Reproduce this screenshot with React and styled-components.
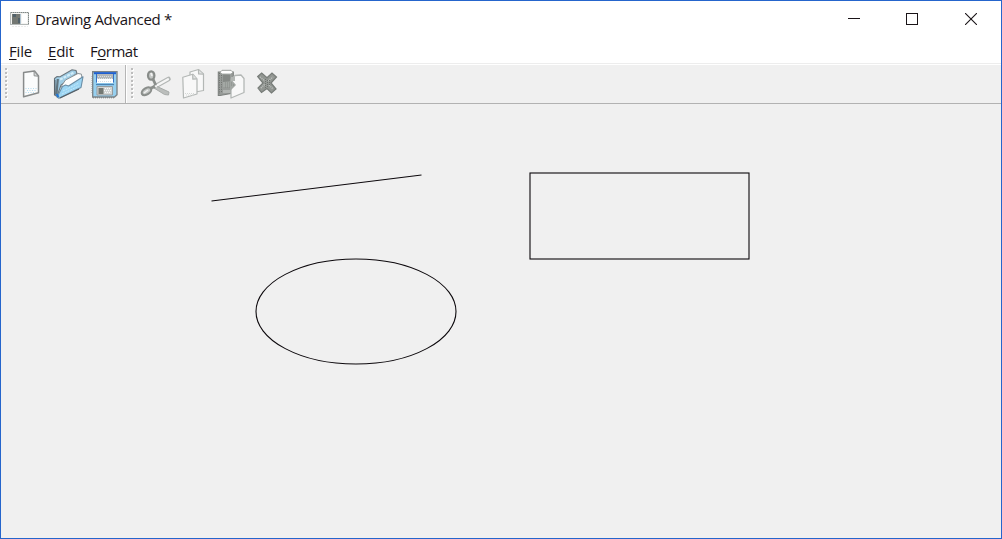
import React from "react";
import styled, { createGlobalStyle } from "styled-components";

const GlobalStyle = createGlobalStyle`
  * { box-sizing: border-box; }
  body { margin: 0; background: #fff; }
`;

const Window = styled.div`
  width: 1002px;
  height: 539px;
  display: flex;
  flex-direction: column;
  border: 1px solid #2565cc;
  background: #f0f0f0;
  color: #1a1418;
  font-family: "Open Sans", "Noto Sans", sans-serif;
  overflow: hidden;
`;

const TitleBar = styled.header`
  height: 37px;
  display: flex;
  align-items: center;
  background: #fff;
  padding: 0 1px 1px 9px;
`;

const Title = styled.div`
  flex: 1;
  margin-left: 5px;
  font-size: 15px;
  line-height: 20px;
  letter-spacing: ${(p) => p.$tracking}px;
  white-space: pre;
`;

const CaptionButton = styled.button`
  width: 58.4px;
  height: 36px;
  padding: 0;
  border: 0;
  background: transparent;
  display: flex;
  align-items: center;
  justify-content: center;
`;

const MenuBar = styled.nav`
  height: 27px;
  display: flex;
  background: #fff;
  padding: 3px 0 0 8px;
  box-shadow: inset 0 -1px #fff, inset 0 -2px #ededed;
`;

const MenuItem = styled.div`
  width: ${(p) => p.$width}px;
  font-size: 15px;
  line-height: 20px;
  letter-spacing: ${(p) => p.$tracking}px;
  u { text-underline-offset: 2px; text-decoration-thickness: 1px; text-decoration-skip-ink: none; }
`;

const ToolBar = styled.div`
  height: 39px;
  flex: none;
  display: flex;
  border-bottom: 1px solid #b2b2b2;
`;

const ToolGroup = styled.div`
  display: flex;
  gap: 1px;
  width: ${(p) => p.$width}px;
  padding-left: ${(p) => p.$inset}px;
  border-right: ${(p) => (p.$divided ? "1px solid #b5b5b5" : "0")};
  box-shadow: ${(p) => (p.$divided ? "1px 0 #fff" : "none")};
`;

const Grip = styled.svg`
  width: 4px;
  height: 34px;
  margin: 2px ${(p) => p.$after}px 0 0;
`;

const ToolButton = styled.button`
  width: 36px;
  height: 38px;
  padding: 3px 2px;
  border: 0;
  background: transparent;
  svg { display: block; width: 32px; height: 32px; overflow: visible; }
`;

const Canvas = styled.svg`
  display: block;
  flex: none;
  width: 1000px;
  height: 434px;
`;

function AppIcon() {
  return (
    <svg width="20" height="18" viewBox="0 0 20 18" shapeRendering="crispEdges">
      <path d="M.5 2.5h18v12H.5z" fill="#f4f4f2" stroke="#b4b9b8" />
      <path d="M2 4h8v10H2z" fill="#747873" />
      <path d="M3 4h3v3H3zM8 8h2v5H8z" fill="#52626b" />
      <path d="M10 4h1v10h-1z" fill="#afc2cf" />
      <path d="M12 4h5v9h-5z" fill="#fff" />
      <path d="M1 2.5h18M18.5 3v12" fill="none" stroke="#818886" strokeDasharray="1 1" />
      <path d="M2 16.5h16" stroke="#ececec" strokeDasharray="2 1" />
    </svg>
  );
}

function DragGrip({ after }) {
  return (
    <Grip $after={after} viewBox="0 0 4 34" shapeRendering="crispEdges">
      {[0, 4, 8, 12, 16, 20, 24, 28].map((y) => (
        <g key={y}>
          <path d={`M1 ${y + 2}h2v2h-2z`} fill="#fff" />
          <path d={`M0 ${y + 1}h2v2h-2z`} fill="#bdbdbd" />
        </g>
      ))}
    </Grip>
  );
}

function NewIcon() {
  return (
    <svg viewBox="0 0 32 32">
      <path d="M8.6 4.5 19.5 3l4 5v16.7L8.6 28.8z" fill="#fbfcfc" stroke="#888b8b" strokeWidth="1.5" strokeLinejoin="round" />
      <path d="M19.1 3.2v4.6l4.2.4z" fill="#d9dddd" stroke="#8d9090" />
      <path d="M10.5 20.5h11M12 22.5h9M10.5 24.5h9" stroke="#b7ddf0" strokeDasharray="1 1.5" />
    </svg>
  );
}

function OpenIcon() {
  return (
    <svg viewBox="0 0 32 32">
      <path d="M2.5 10.5 5 8.5l3 .3L20 1.8l4 .7 1 3L9 17 5 28.5 2.5 27z" fill="#9fcce4" stroke="#6a757c" strokeWidth="1.1" />
      <path d="M8 11.5 22 4.5" fill="none" stroke="#d2edf9" strokeWidth="2.2" strokeDasharray="3 1" />
      <path d="m9.5 18 4-6L26 5.5l3.4.6.6 4-19 12z" fill="#fcfcfc" stroke="#8a9398" />
      <path d="m5 29 5.5-10.5 3-1.5 3 1L31 8.8 29 19.5 7 30.2z" fill="#9cd5f3" stroke="#6a8da5" strokeWidth="1.1" strokeLinejoin="round" />
      <path d="m11 23 16-8M10 26l17-8" stroke="#c4e9fa" strokeDasharray="2 1" />
      <path d="M5.8 11 4.5 26" stroke="#62757f" strokeWidth="2.2" />
      <path d="m2.8 12 .2 15M8 30l19-9" stroke="#555f66" strokeWidth="1.2" />
      <path d="m4.5 26 2 3" stroke="#1f75d4" strokeWidth="2" />
    </svg>
  );
}

function SaveIcon() {
  return (
    <svg viewBox="0 0 32 32">
      <path d="M3.7 3.7H28v23.1l-2.5 2.2H3.7z" fill="#96d0f0" stroke="#7d8488" strokeWidth="1.4" />
      <path d="M5 5.2h22" stroke="#205fd0" strokeWidth="2" />
      <path d="M8 6h16v9H8z" fill="#b4b7b8" />
      <path d="M8 11h16v4H8z" fill="#fff" />
      <path d="M9 8.5h14M8 10.5h15M9 13.5h14" stroke="#d8e1e5" strokeDasharray="1 1" />
      <path d="M7.5 6v8.5M24.5 6v8.5" stroke="#346fc5" />
      <path d="M7 16.5h18" stroke="#4c83b4" strokeWidth="1.3" />
      <path d="M8 18.5h15.5V27H8z" fill="#d3d5d4" stroke="#979b9d" />
      <path d="M9.5 20h5v6h-5z" fill="#737873" />
      <path d="M16 20.5h6M15 22.5h7M16 24.5h6" stroke="#f8f8f8" strokeDasharray="1 1" />
      <path d="M4 29.8h21" stroke="#777d7d" strokeDasharray="1 1" />
      <path d="M2.5 8v18" stroke="#c7cccf" strokeDasharray="1 1" />
    </svg>
  );
}

function CutIcon() {
  return (
    <svg viewBox="0 0 32 32" fill="none">
      <path d="M16 18.5 29.5 11" stroke="#b3b7b5" strokeWidth="4.6" strokeLinecap="round" />
      <path d="M17 18 29 11.2" stroke="#f6f6f6" strokeWidth="2.2" strokeLinecap="round" />
      <path d="m16 17.5 14 6.5-.5 3-4-.5L15 20z" fill="#bbbebc" stroke="#a7aba9" />
      <ellipse cx="12.2" cy="7.5" rx="3.2" ry="4.2" fill="#c5c8c6" stroke="#888c89" strokeWidth="2.2" />
      <path d="m12 5 1 3" stroke="#f2f2f2" strokeWidth="1.8" />
      <path d="m14 11 2.7 6" stroke="#8a8e8b" strokeWidth="2.8" />
      <ellipse cx="7.5" cy="23.3" rx="5.3" ry="3.2" transform="rotate(-33 7.5 23.3)" fill="#c5c8c6" stroke="#8a8e8b" strokeWidth="2.1" />
      <path d="m5 25 4-3" stroke="#f2f2f2" strokeWidth="1.5" />
      <path d="m11 20.5 5-2.2" stroke="#8a8e8b" strokeWidth="3" />
      <path d="m16 18 2 .8" stroke="#f0f0f0" strokeWidth="1.6" />
    </svg>
  );
}

function CopyIcon() {
  return (
    <svg viewBox="0 0 32 32" fill="#f8f8f8" stroke="#b3b7b5" strokeWidth="1.2" strokeLinejoin="round">
      <path d="m14 4 8.5-2.5L27.5 6v16.5L14 25z" />
      <path d="m22.5 1.7.1 4.3 4.7.2" fill="#e1e3e2" />
      <path d="m6.8 9.2 10-3L21 11v15L7.5 30z" />
      <path d="m16.7 6.2.1 5 4-.3" fill="#e1e3e2" />
      <path d="M9 25.5h10M10 27h7" stroke="#d4d7d5" strokeDasharray="1 1" />
    </svg>
  );
}

function PasteIcon() {
  return (
    <svg viewBox="0 0 32 32">
      <path d="M5.3 4h15v21L7 27.5H5.3z" fill="#989c99" stroke="#7d817e" strokeWidth="1.1" />
      <path d="M6.5 5v21M8.5 7v18" stroke="#6f736f" strokeDasharray="1 1.3" />
      <path d="m10 6 7 1v6l-7 1z" fill="#858986" />
      <path d="M9 2.3h9l2 2-2 1.8H9L7 4.3z" fill="#fff" stroke="#9da19e" />
      <path d="m18 12 4-4.5L28 7l3 3.5v14L18 30z" fill="#f8f8f8" stroke="#b3b7b5" strokeWidth="1.3" strokeLinejoin="round" />
      <path d="M10 14h7v-4l6 7-6 6v-4h-7z" fill="#a3a8a4" />
      <path d="M18 9v4h4V9zM10 22h7v3h-7z" fill="#b2b6b3" />
      <path d="M12 15h8M12 17h9M12 19h6" stroke="#858a86" strokeDasharray="1 1" />
    </svg>
  );
}

function DeleteIcon() {
  return (
    <svg viewBox="0 0 32 32">
      <path d="m7.7 8.5 4-3.5 5.3 4.8L22 5l4.5 4-5.5 6 5 6-4.5 4-4.5-4.5-5.5 4-3.5-4.5 5-5z" fill="#929692" stroke="#777c78" strokeWidth="1.2" />
      <path d="m10 9 5 4M18 13l5-4M11 20l4-4M19 17l4 4" stroke="#c0c4c1" strokeWidth="1.4" strokeDasharray="1 1" />
      <path d="M15.5 11v9M17.5 12v7M19.5 12v6" stroke="#6e736f" strokeWidth="1" strokeDasharray="1 1" />
    </svg>
  );
}

const fileTools = [["New", NewIcon], ["Open", OpenIcon], ["Save", SaveIcon]];
const editTools = [["Cut", CutIcon], ["Copy", CopyIcon], ["Paste", PasteIcon], ["Delete", DeleteIcon]];

function Tools({ items }) {
  return items.map(([label, Icon]) => (
    <ToolButton key={label} aria-label={label}><Icon /></ToolButton>
  ));
}

export default function App() {
  return (
    <>
      <GlobalStyle />
      <Window>
        <TitleBar>
          <AppIcon />
          <Title $tracking={-0.32}>Drawing Advanced *</Title>
          <CaptionButton aria-label="Minimize">
            <svg width="12" height="12" shapeRendering="crispEdges"><path d="M0 5.5h12" stroke="#1a1418" /></svg>
          </CaptionButton>
          <CaptionButton aria-label="Maximize">
            <svg width="12" height="12" shapeRendering="crispEdges"><path d="M.5.5h11v11H.5z" fill="none" stroke="#1a1418" /></svg>
          </CaptionButton>
          <CaptionButton aria-label="Close">
            <svg width="12" height="12"><path d="m0 0 12 12M12 0 0 12" stroke="#1a1418" strokeWidth="1.1" /></svg>
          </CaptionButton>
        </TitleBar>
        <MenuBar>
          <MenuItem $width={39} $tracking={-0.2}><u>F</u>ile</MenuItem>
          <MenuItem $width={42} $tracking={-0.2}><u>E</u>dit</MenuItem>
          <MenuItem $width={60} $tracking={-0.5}>F<u>o</u>rmat</MenuItem>
        </MenuBar>
        <ToolBar>
          <ToolGroup $width={125} $inset={4} $divided>
            <DragGrip after={3} />
            <Tools items={fileTools} />
          </ToolGroup>
          <ToolGroup $width={300} $inset={5}>
            <DragGrip after={1} />
            <Tools items={editTools} />
          </ToolGroup>
        </ToolBar>
        <Canvas viewBox="0 0 1000 434" fill="none" stroke="#0c080c" strokeWidth="1.1">
          <path d="M210.5 97 420.5 71" />
          <rect x="529" y="69" width="219" height="86" />
          <ellipse cx="355" cy="207.5" rx="100" ry="52.5" />
        </Canvas>
      </Window>
    </>
  );
}
